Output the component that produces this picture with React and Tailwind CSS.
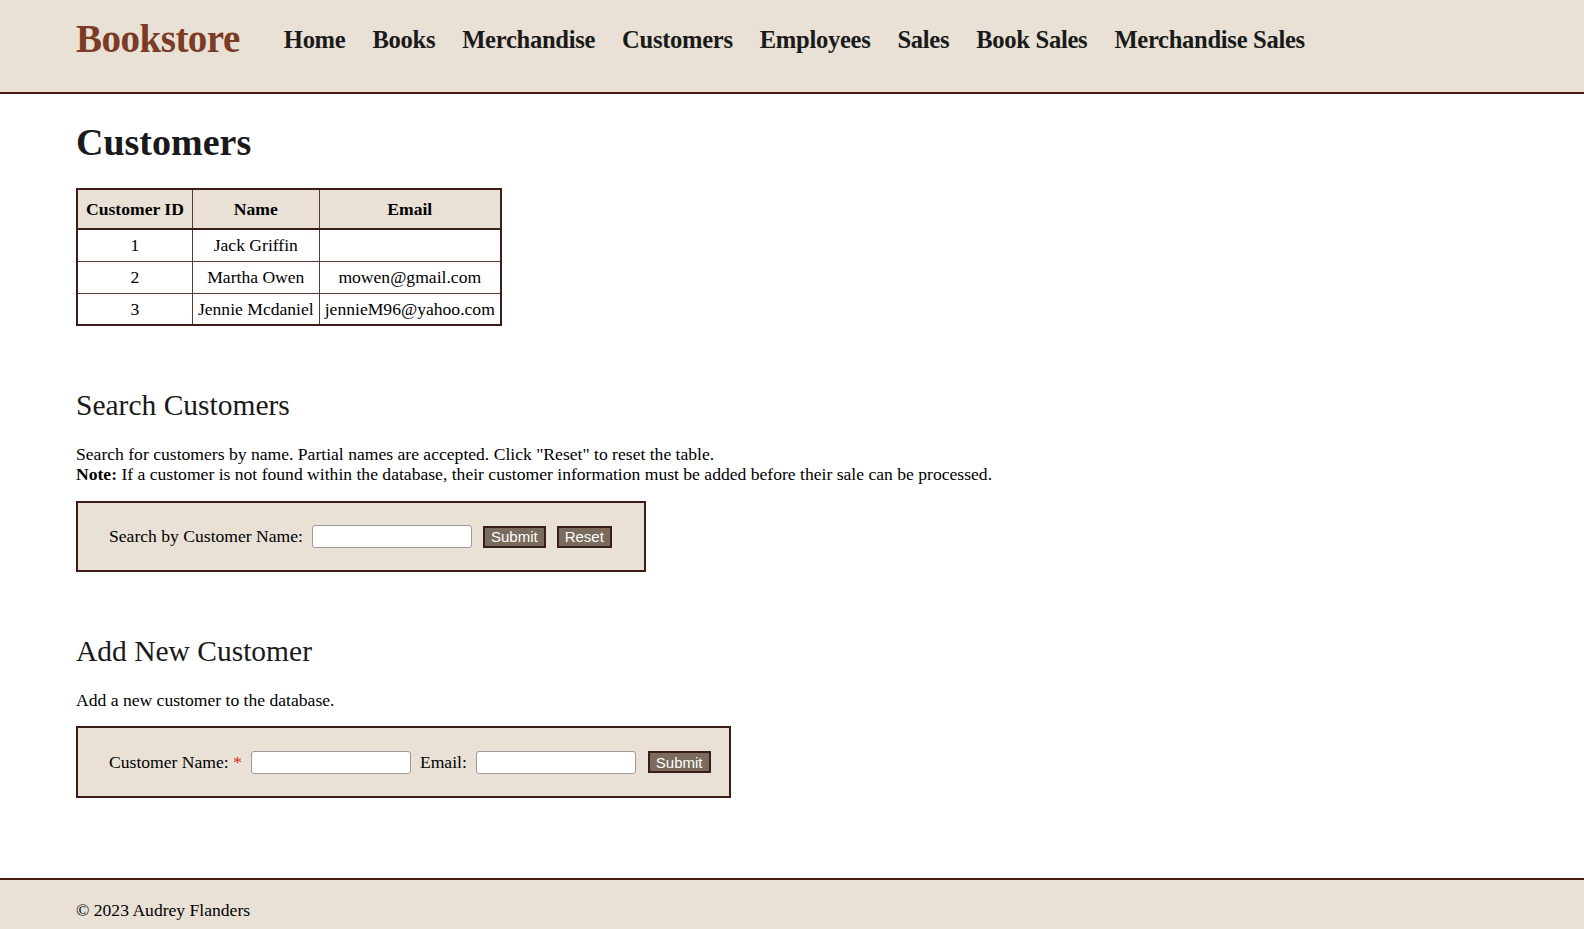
import React from "react";

const serif = { fontFamily: '"Liberation Serif", "Times New Roman", serif' };

const navItems = ["Home", "Books", "Merchandise", "Customers", "Employees", "Sales", "Book Sales", "Merchandise Sales"];

const customers = [
  { id: 1, name: "Jack Griffin", email: "" },
  { id: 2, name: "Martha Owen", email: "mowen@gmail.com" },
  { id: 3, name: "Jennie Mcdaniel", email: "jennieM96@yahoo.com" },
];

function Button({ children }) {
  return (
    <button className="h-[22px] px-[6px] bg-[#7a6b5d] border-2 border-[#3a1d16] text-white text-[15px] leading-none font-['Liberation_Sans',Arial,sans-serif]">
      {children}
    </button>
  );
}

function TextInput() {
  return <input type="text" className="w-[160px] h-[23px] bg-white border border-[#9a9a9a] rounded-[3px] px-1 text-[14px]" />;
}

export default function App() {
  return (
    <div className="min-h-[929px] flex flex-col bg-white text-black text-[17.6px]" style={serif}>
      <header className="h-[94px] bg-[#e9e1d6] border-b-2 border-[#4a1c14] flex items-center pl-[76px] pb-[14px]">
        <div className="text-[39px] font-bold text-[#7b3b24] tracking-[-0.5px]">Bookstore</div>
        <nav className="flex items-center gap-[27px] ml-[44px] pt-[2px]">
          {navItems.map((item) => (
            <a key={item} href="#" className="text-[24.6px] font-bold text-[#1a1a1a] tracking-[-0.3px]">
              {item}
            </a>
          ))}
        </nav>
      </header>

      <main className="flex-1 pl-[76px] pb-[80px]">
        <h1 className="text-[38px] font-bold mt-[24px] leading-[48px] text-[#1a1a1a]">Customers</h1>

        <table className="mt-[22px] border-2 border-[#3a1f18] border-collapse whitespace-nowrap">
          <thead>
            <tr className="bg-[#e9e1d6] h-[40px]">
              <th className="border-2 border-[#3a1f18] border-r border-r-[#5a3a30] px-[8px] font-bold">Customer ID</th>
              <th className="border-2 border-[#3a1f18] border-x border-x-[#5a3a30] px-[5px] font-bold">Name</th>
              <th className="border-2 border-[#3a1f18] border-l border-l-[#5a3a30] px-[5px] font-bold">Email</th>
            </tr>
          </thead>
          <tbody>
            {customers.map((c) => (
              <tr key={c.id} className="h-[32px] text-center">
                <td className="border border-[#5a3a30] px-[5px]">{c.id}</td>
                <td className="border border-[#5a3a30] px-[5px]">{c.name}</td>
                <td className="border border-[#5a3a30] px-[5px]">{c.email}</td>
              </tr>
            ))}
          </tbody>
        </table>

        <h2 className="text-[29.5px] mt-[62px] leading-[34px] text-[#1a1a1a]">Search Customers</h2>
        <p className="mt-[22px] leading-[20px]">
          Search for customers by name. Partial names are accepted. Click "Reset" to reset the table.
          <br />
          <b>Note:</b> If a customer is not found within the database, their customer information must be added before their sale can be processed.
        </p>

        <div className="mt-[17px] w-[570px] h-[71px] bg-[#e9e1d6] border-2 border-[#3a1d16] flex items-center pl-[31px]">
          <label className="mr-[9px]">Search by Customer Name:</label>
          <TextInput />
          <div className="ml-[11px] flex gap-[11px]">
            <Button>Submit</Button>
            <Button>Reset</Button>
          </div>
        </div>

        <h2 className="text-[29.5px] mt-[62px] leading-[34px] text-[#1a1a1a]">Add New Customer</h2>
        <p className="mt-[22px] leading-[20px]">Add a new customer to the database.</p>

        <div className="mt-[16px] w-[655px] h-[72px] bg-[#e9e1d6] border-2 border-[#3a1d16] flex items-center pl-[31px]">
          <label className="mr-[9px]">
            Customer Name: <span className="text-[#e02020]">*</span>
          </label>
          <TextInput />
          <label className="ml-[9px] mr-[9px]">Email:</label>
          <TextInput />
          <div className="ml-[12px]">
            <Button>Submit</Button>
          </div>
        </div>
      </main>

      <footer className="bg-[#e9e1d6] border-t-2 border-[#4a1c14] pl-[76px] pt-[17px] pb-[12px]">
        <p>© 2023 Audrey Flanders</p>
      </footer>
    </div>
  );
}
